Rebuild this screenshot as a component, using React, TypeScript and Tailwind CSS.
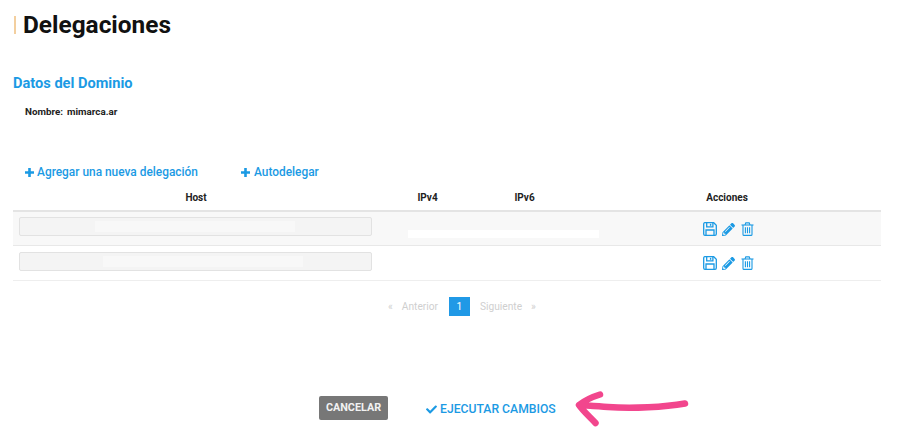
import { FaCheck, FaPencilAlt } from "react-icons/fa";

const BLUE = "text-[#1b9ae4]";

function Plus() {
  return (
    <svg className="h-[9px] w-[9px] shrink-0" viewBox="0 0 9 9" fill="currentColor">
      <path d="M3.2 0h2.6v3.2H9v2.6H5.8V9H3.2V5.8H0V3.2h3.2z" />
    </svg>
  );
}

function SaveIcon() {
  return (
    <svg className="h-[14px] w-[14px]" viewBox="0 0 14 14" fill="none" stroke="currentColor" strokeWidth="1.3">
      <path d="M1.7.7h9l2.6 2.6v8.7a1.3 1.3 0 0 1-1.3 1.3H2A1.3 1.3 0 0 1 .7 12V2A1.3 1.3 0 0 1 1.7.7z" />
      <path d="M3.7.9v4h6.2v-4" />
      <path d="M3 13v-5h8v5" />
      <path d="M7.6 1.8v2" strokeWidth="1.4" />
    </svg>
  );
}

function TrashIcon() {
  return (
    <svg className="h-[14px] w-[13px]" viewBox="0 0 13 14" fill="none" stroke="currentColor" strokeWidth="1.1">
      <path d="M.5 3h12" />
      <path d="M4 3l.8-2.1h3.4L9 3" />
      <path d="M2 3v9.4c0 .6.4 1 1 1h7c.6 0 1-.4 1-1V3" />
      <path d="M4.4 5.2v6M6.5 5.2v6M8.6 5.2v6" />
    </svg>
  );
}

function HostInput({ patch }: { patch: string }) {
  return (
    <div className="ml-[6px] flex h-[19px] w-[353px] items-center rounded-[2px] border border-[#e2e2e2] bg-[#f4f4f4]">
      <div className={`h-[11px] w-[200px] bg-[#f8f8f8] ${patch}`} />
    </div>
  );
}

function RowActions() {
  return (
    <div className={`flex items-center justify-center gap-[5px] pl-[3px] ${BLUE}`}>
      <SaveIcon />
      <FaPencilAlt className="h-[13px] w-[13px]" />
      <span className="ml-[1px]">
        <TrashIcon />
      </span>
    </div>
  );
}

export default function App() {
  return (
    <div className="relative h-[438px] w-[899px] overflow-hidden bg-white font-['Roboto',sans-serif] text-[#111]">
      <div className="flex items-center pl-[14px] pt-[10px]">
        <span className="h-[18px] w-[2px] bg-[#f3cf9f]" />
        <h1 className="ml-[7px] text-[24.4px] leading-[30px] font-bold">Delegaciones</h1>
      </div>

      <h2 className={`ml-[13px] mt-[33px] text-[14.6px] leading-[20px] font-bold ${BLUE}`}>Datos del Dominio</h2>

      <div className="ml-[25px] mt-[12px] flex gap-[4px] text-[9.8px] leading-[14px] font-bold text-[#222]">
        <span>Nombre:</span>
        <span>mimarca.ar</span>
      </div>

      <div className={`ml-[25px] mt-[45px] flex text-[11.9px] leading-[16px] font-medium ${BLUE}`}>
        <a className="flex w-[216px] items-center gap-[3px]">
          <Plus />
          Agregar una nueva delegación
        </a>
        <a className="flex items-center gap-[4px]">
          <Plus />
          Autodelegar
        </a>
      </div>

      <div className="mx-[13px] mt-[8px] w-[868px]">
        <div className="grid h-[24px] grid-cols-[366px_97px_97px_1fr] items-center border-b-2 border-[#e4e4e4] pb-[4px] text-center text-[10px] font-bold text-[#222]">
          <span>Host</span>
          <span>IPv4</span>
          <span>IPv6</span>
          <span>Acciones</span>
        </div>
        <div className="grid h-[34px] grid-cols-[366px_97px_97px_1fr] border-b border-[#e8e8e8] bg-[#f8f8f8]">
          <div className="pt-[5px]">
            <HostInput patch="ml-[75px]" />
          </div>
          <div className="col-span-2 ml-[29px] mt-[18px] h-[8px] w-[191px] bg-white" />
          <div className="pt-[10px]">
            <RowActions />
          </div>
        </div>
        <div className="grid h-[35px] grid-cols-[366px_97px_97px_1fr] border-b border-[#eeeeee]">
          <div className="pt-[6px]">
            <HostInput patch="ml-[83px]" />
          </div>
          <div className="col-span-2" />
          <div className="pt-[10px]">
            <RowActions />
          </div>
        </div>
      </div>

      <div className="ml-[388px] mt-[16px] flex items-center text-[10.2px] text-[#cfcfcf]">
        <span>«</span>
        <span className="ml-[9px]">Anterior</span>
        <span className="ml-[11px] flex h-[19px] w-[21px] items-center justify-center bg-[#2099e6] text-white">1</span>
        <span className="ml-[10px]">Siguiente</span>
        <span className="ml-[9px]">»</span>
      </div>

      <div className="ml-[319px] mt-[80px] flex items-center">
        <button className="h-[24px] w-[69px] rounded-[2px] bg-[#777777] text-[10.8px] font-bold text-[#f2f2f2]">CANCELAR</button>
        <a className={`ml-[38px] mt-[3px] flex items-center gap-[3px] text-[12.2px] font-medium ${BLUE}`}>
          <FaCheck className="h-[11px] w-[11px]" />
          EJECUTAR CAMBIOS
        </a>
      </div>

      {/* flecha rosa encima del boton */}
      <svg className="absolute left-[570px] top-[385px]" width="125" height="45" viewBox="0 0 125 45" fill="none">
        <path
          d="M115 18.5C95 22 62 24 38 22C27 21 17 20.5 10 20M30 9.5C22 12 14 16 9 20C13 26 20 32 25.5 38"
          stroke="#f2468d"
          strokeWidth="6.5"
          strokeLinecap="round"
          strokeLinejoin="round"
        />
      </svg>
    </div>
  );
}
